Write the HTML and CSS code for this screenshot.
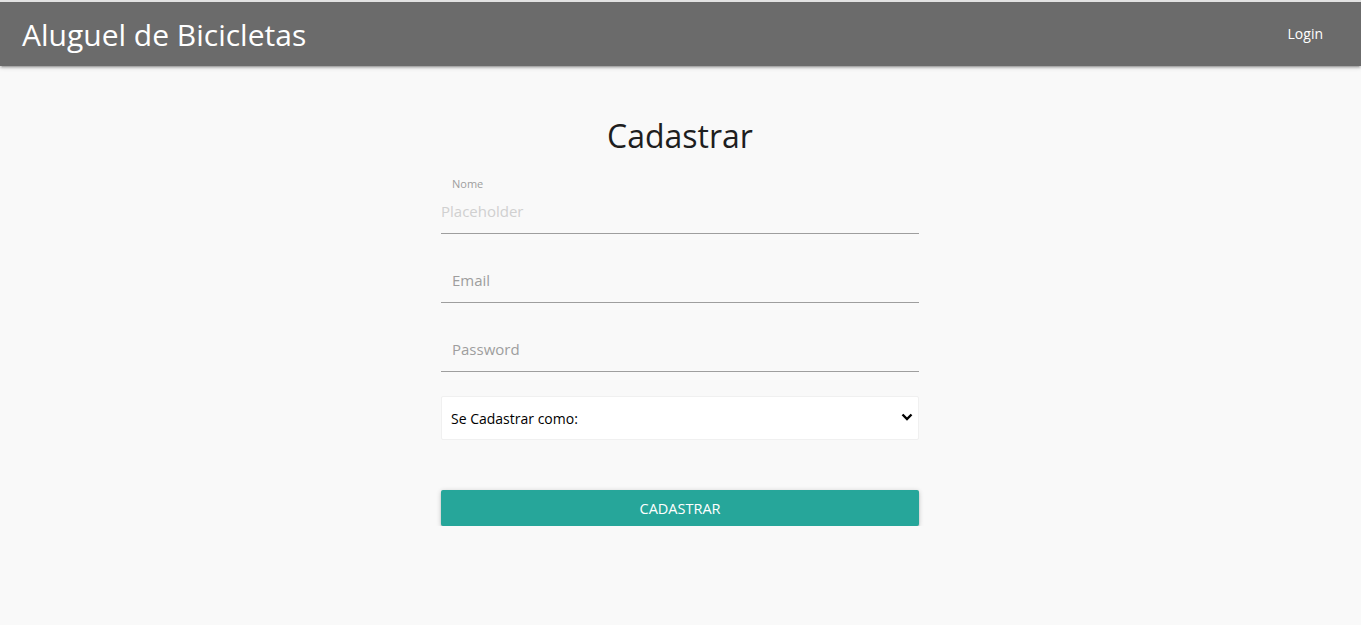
FILE: index.html
```html
<!DOCTYPE html>
<html lang="pt">
<head>
<meta charset="utf-8">
<title>Aluguel de Bicicletas</title>
<link rel="stylesheet" href="styles.css">
</head>
<body>
<nav class="nav">
  <a class="brand" href="#">Aluguel de Bicicletas</a>
  <ul class="nav-links">
    <li><a href="#">Login</a></li>
  </ul>
</nav>
<main class="page">
  <div class="container">
    <h4 class="title">Cadastrar</h4>
    <form class="form">
      <div class="field">
        <label class="label label-active">Nome</label>
        <div class="input placeholder">Placeholder</div>
      </div>
      <div class="field">
        <div class="input"><span class="label-inline">Email</span></div>
      </div>
      <div class="field">
        <div class="input"><span class="label-inline">Password</span></div>
      </div>
      <div class="select">
        <span>Se Cadastrar como:</span>
        <svg class="chev" width="12" height="8" viewBox="0 0 12 8"><path d="M1.5 1.5 L6 6 L10.5 1.5" fill="none" stroke="#000" stroke-width="2.4"/></svg>
      </div>
      <button type="button" class="btn">CADASTRAR</button>
    </form>
  </div>
</main>
</body>
</html>
```
FILE: styles.css
```css
html, body {
  margin: 0;
  padding: 0;
}
body {
  background: #f9f9f9;
  font-family: "Open Sans", "Noto Sans", sans-serif;
  border-top: 2px solid #e2e2e2;
}
.nav {
  height: 64px;
  background: #6b6b6b;
  box-shadow: 0 2px 2px 0 rgba(0,0,0,0.14), 0 3px 1px -2px rgba(0,0,0,0.12), 0 1px 5px 0 rgba(0,0,0,0.2);
  display: flex;
  align-items: center;
  justify-content: space-between;
  padding: 0 23px 0 22px;
}
.brand {
  color: #fff;
  text-decoration: none;
  font-size: 30px;
}
.nav-links {
  list-style: none;
  margin: 0 0 2px;
  padding: 0;
}
.nav-links a {
  color: #fff;
  text-decoration: none;
  font-size: 14px;
  padding: 0 15px;
}
.page {
  padding-right: 1px;
}
.container {
  width: 478px;
  margin: 0 auto;
}
.title {
  margin: 0;
  padding-top: 48px;
  text-align: center;
  font-weight: 400;
  font-size: 32px;
  line-height: 44px;
  color: #1e1e1e;
}
.form {
  margin-top: 31px;
  display: flex;
  flex-direction: column;
}
.field {
  position: relative;
  margin-bottom: 24px;
}
.label {
  position: absolute;
  left: 11px;
  top: -13px;
  font-size: 11px;
  color: #9e9e9e;
}
.input {
  height: 44px;
  border-bottom: 1px solid #9e9e9e;
  display: flex;
  align-items: center;
  font-size: 15px;
}
.placeholder {
  color: #d0d0d0;
}
.label-inline {
  padding-left: 11px;
  color: #9e9e9e;
}
.select {
  height: 42px;
  background: #fff;
  border: 1px solid #f0f0f0;
  border-radius: 2px;
  display: flex;
  align-items: center;
  justify-content: space-between;
  padding: 0 5px 0 9px;
  font-size: 14px;
  color: #000;
}
.chev {
  margin-top: -2px;
}
.btn {
  margin-top: 50px;
  height: 36px;
  border: none;
  border-radius: 2px;
  background: #26a69a;
  color: #fff;
  font-family: inherit;
  font-size: 14.5px;
  box-shadow: 0 2px 2px 0 rgba(0,0,0,0.14), 0 3px 1px -2px rgba(0,0,0,0.12), 0 1px 5px 0 rgba(0,0,0,0.2);
}
```
